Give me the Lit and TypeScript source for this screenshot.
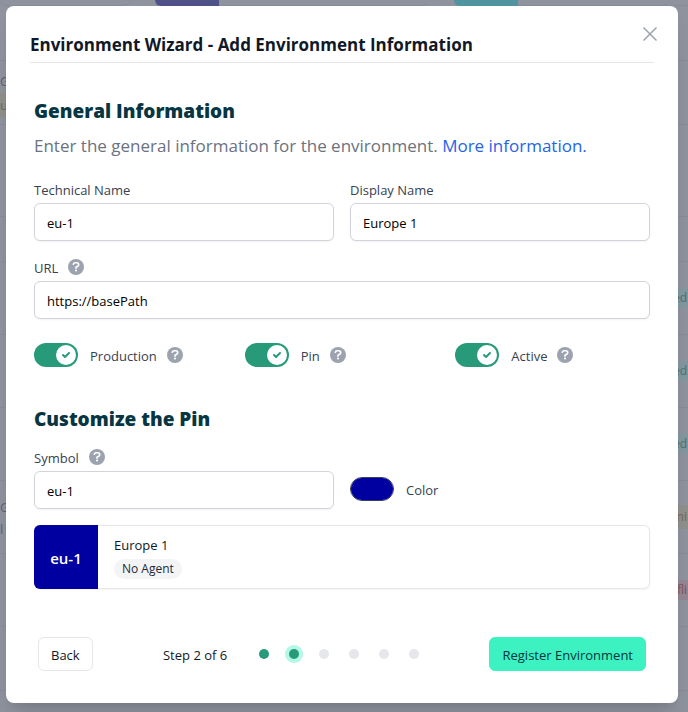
import { LitElement, html, css, nothing } from "lit";
import { customElement, property, state } from "lit/decorators.js";
import { classMap } from "lit/directives/class-map.js";

const fieldStyles = css`
  * {
    box-sizing: border-box;
  }
  .label-row {
    display: flex;
    align-items: center;
    gap: 10px;
    height: 20px;
    margin-bottom: 4px;
  }
  .label {
    padding-top: 2px;
    font-size: 13px;
    line-height: 20px;
    color: #374151;
  }
`;

@customElement("help-icon")
export class HelpIcon extends LitElement {
  static styles = css`
    :host {
      display: block;
      width: 16px;
      height: 16px;
      flex: none;
    }
    .icon {
      display: block;
    }
  `;

  render() {
    return html`<svg class="icon" width="16" height="16" viewBox="0 0 512 512" aria-hidden="true">
      <circle cx="256" cy="256" r="256" fill="#9ca3af" />
      <path
        d="M170 166c8-28 30-46 60-46h50c36 0 62 26 62 60 0 24-12 42-32 54l-54 32v30"
        fill="none"
        stroke="#fff"
        stroke-width="52"
        stroke-linecap="round"
        stroke-linejoin="round"
      />
      <circle cx="256" cy="368" r="34" fill="#fff" />
    </svg>`;
  }
}

@customElement("text-field")
export class TextField extends LitElement {
  @property() label = "";
  @property() value = "";
  @property({ type: Boolean }) help = false;

  static styles = [
    fieldStyles,
    css`
      :host {
        display: block;
        min-width: 0;
      }
      .input {
        display: block;
        width: 100%;
        height: 38px;
        padding: 2px 12px 0;
        border: 1px solid #d1d5db;
        border-radius: 6px;
        background: #fff;
        box-shadow: 0 1px 2px rgba(0, 0, 0, 0.05);
        font-family: inherit;
        font-size: 13px;
        line-height: 20px;
        color: #000;
      }
    `,
  ];

  render() {
    return html`
      <div class="label-row">
        <label class="label" for="field">${this.label}</label>
        ${this.help ? html`<help-icon></help-icon>` : nothing}
      </div>
      <input class="input" id="field" type="text" .value=${this.value} />
    `;
  }
}

@customElement("toggle-field")
export class ToggleField extends LitElement {
  @property() label = "";
  @property({ type: Boolean }) checked = false;

  static styles = [
    fieldStyles,
    css`
      :host {
        display: flex;
        align-items: center;
        height: 24px;
        gap: 10px;
      }
      .toggle {
        display: flex;
        align-items: center;
        gap: 12px;
      }
      .switch {
        display: grid;
        width: 44px;
        height: 24px;
        border-radius: 12px;
        background: #e5e7eb;
        padding: 2px;
      }
      .on {
        background: #279a7a;
      }
      .box,
      .knob {
        grid-area: 1 / 1;
      }
      .box {
        margin: 0;
        width: 40px;
        height: 20px;
        opacity: 0;
      }
      .knob {
        display: grid;
        place-items: center;
        width: 20px;
        height: 20px;
        border-radius: 50%;
        background: #fff;
        pointer-events: none;
      }
      .on .knob {
        justify-self: end;
      }
    `,
  ];

  render() {
    return html`
      <label class="toggle">
        <span class=${classMap({ switch: true, on: this.checked })}>
          <input
            class="box"
            type="checkbox"
            .checked=${this.checked}
            @change=${(e: Event) => (this.checked = (e.target as HTMLInputElement).checked)}
          />
          <span class="knob">
            ${this.checked
              ? html`<svg width="12" height="12" viewBox="0 0 12 12" fill="#279a7a" aria-hidden="true">
                  <path
                    d="M3.707 5.293a1 1 0 00-1.414 1.414l1.414-1.414zM5 8l-.707.707a1 1 0 001.414 0L5 8zm4.707-3.293a1 1 0 00-1.414-1.414l1.414 1.414zm-7.414 2l2 2 1.414-1.414-2-2-1.414 1.414zm3.414 2l4-4-1.414-1.414-4 4 1.414 1.414z"
                  />
                </svg>`
              : nothing}
          </span>
        </span>
        <span class="label">${this.label}</span>
      </label>
      <help-icon></help-icon>
    `;
  }
}

interface BackdropRow {
  size: string;
  left?: string[];
  leftTone?: string;
  right?: string;
  rightTone?: string;
}

const rows: BackdropRow[] = [
  { size: "h55" },
  { size: "h64", left: ["G", "u"], leftTone: "amber" },
  { size: "h92" },
  { size: "h45" },
  { size: "h73", right: "ed", rightTone: "teal" },
  { size: "h73", right: "ed", rightTone: "teal" },
  { size: "h73", right: "ed", rightTone: "teal" },
  { size: "h73", left: ["G", "l"], right: "ni", rightTone: "amber" },
  { size: "h73", right: "fli", rightTone: "rose" },
  { size: "h64" },
];

@customElement("dimmed-page")
export class DimmedPage extends LitElement {
  static styles = css`
    * {
      box-sizing: border-box;
    }
    :host {
      display: block;
      background: #8f939e;
      color: #5f636e;
      font-size: 13px;
      line-height: 20px;
    }
    .tiles {
      display: flex;
      height: 6px;
      gap: 25px;
    }
    .tile {
      display: flex;
      flex: none;
      width: 274px;
      border-bottom: 1px solid #888c98;
      border-radius: 0 0 6px 6px;
    }
    .first {
      width: 130px;
    }
    .block {
      width: 64px;
      height: 6px;
      border-radius: 0 0 0 6px;
    }
    .violet {
      background: #4f5289;
    }
    .cyan {
      background: #4f949f;
    }
    .row {
      display: flex;
      justify-content: space-between;
      align-items: center;
      border-bottom: 1px solid #888c98;
    }
    .h45 {
      height: 45px;
    }
    .h55 {
      height: 55px;
    }
    .h64 {
      height: 64px;
    }
    .h73 {
      height: 73px;
    }
    .h92 {
      height: 92px;
    }
    .left {
      display: flex;
      flex-direction: column;
      gap: 2px;
      width: 12px;
      padding-top: 2px;
    }
    .right {
      width: 18px;
      padding-right: 1px;
      font-size: 12px;
      font-weight: 500;
      text-align: right;
      white-space: nowrap;
    }
    .amber {
      background: #8f8f8c;
      color: #75685a;
      padding-top: 2px;
      padding-bottom: 2px;
    }
    .teal {
      background: #82979f;
      color: #4b716f;
    }
    .rose {
      background: #938794;
      color: #80525f;
    }
  `;

  render() {
    return html`
      <div class="tiles">
        <div class="tile first"></div>
        <div class="tile"><div class="block violet"></div></div>
        <div class="tile"><div class="block cyan"></div></div>
      </div>
      ${rows.map(
        (row) => html`<div class="row ${row.size}">
          <div class="left">
            ${(row.left ?? []).map(
              (text, i) => html`<span class=${i === 1 ? row.leftTone ?? "" : ""}>${text}</span>`
            )}
          </div>
          <div class="right ${row.rightTone ?? ""}">${row.right ?? nothing}</div>
        </div>`
      )}
    `;
  }
}

@customElement("app-root")
export class AppRoot extends LitElement {
  @state() private step = 2;
  @state() private color = "#0000a0";

  static styles = [
    fieldStyles,
    css`
      :host {
        display: block;
        position: relative;
        min-height: 100vh;
        overflow: hidden;
        padding: 6px 10px 9px 6px;
        background: #8f939e;
        font-family: "Open Sans", "Noto Sans", sans-serif;
      }
      .page {
        position: absolute;
        inset: 0;
      }
      .dialog {
        position: relative;
        padding: 24px 24px 32px;
        border-radius: 8px;
        background: #fff;
        box-shadow:
          0 20px 25px -5px rgba(0, 0, 0, 0.1),
          0 8px 10px -6px rgba(0, 0, 0, 0.1);
      }
      .close {
        position: absolute;
        top: 18px;
        right: 18px;
        width: 20px;
        height: 20px;
        padding: 0;
        border: 0;
        background: none;
        display: grid;
        place-items: center;
      }
      .title {
        margin: 0;
        height: 33px;
        border-bottom: 1px solid #e5e7eb;
        font-size: 17px;
        font-weight: 700;
        line-height: 30px;
        color: #111827;
      }
      .body {
        padding: 34px 4px 0;
      }
      .heading {
        margin: 0;
        font-size: 19px;
        font-weight: 800;
        line-height: 28px;
        color: #073642;
      }
      .intro {
        margin: 7px 0 19px;
        font-size: 17px;
        line-height: 28px;
        color: #6b7280;
      }
      .link {
        color: #2563eb;
        text-decoration: none;
      }
      .pair {
        display: grid;
        grid-template-columns: 1fr 1fr;
        gap: 16px;
        margin-bottom: 16px;
      }
      .toggles {
        display: grid;
        grid-template-columns: repeat(3, 1fr);
        gap: 16px;
        margin: 24px 0 38px;
      }
      .pin-heading {
        margin-bottom: 14px;
      }
      .color-row {
        display: flex;
        align-items: center;
        align-self: end;
        gap: 12px;
        height: 24px;
        margin-bottom: 8px;
      }
      .swatch {
        appearance: none;
        width: 44px;
        height: 24px;
        padding: 0;
        border: 1px solid #374151;
        border-radius: 12px;
        background: none;
        overflow: hidden;
      }
      .swatch::-webkit-color-swatch-wrapper {
        padding: 0;
      }
      .swatch::-webkit-color-swatch {
        border: 0;
      }
      .preview {
        display: flex;
        height: 64px;
        border: 1px solid #e5e7eb;
        border-left: 0;
        border-radius: 6px;
        box-shadow: 0 1px 2px rgba(0, 0, 0, 0.05);
      }
      .pin {
        display: grid;
        place-items: center;
        width: 64px;
        margin: -1px 0;
        padding-top: 2px;
        border-radius: 6px 0 0 6px;
        font-size: 15px;
        font-weight: 600;
        color: #fff;
      }
      .details {
        display: flex;
        flex-direction: column;
        align-items: flex-start;
        gap: 4px;
        padding: 9px 16px;
      }
      .name {
        font-size: 13px;
        line-height: 20px;
        color: #111827;
      }
      .badge {
        height: 20px;
        padding: 0 8px;
        border-radius: 10px;
        background: #f3f4f6;
        font-size: 12px;
        font-weight: 500;
        line-height: 20px;
        color: #1f2937;
      }
      .footer {
        display: flex;
        align-items: center;
        justify-content: space-between;
        padding: 48px 8px 0;
      }
      .button {
        height: 34px;
        padding: 2px 12px 0;
        border: 1px solid #e5e7eb;
        border-radius: 6px;
        background: #fff;
        font-family: inherit;
        font-size: 13px;
        line-height: 20px;
        color: #111827;
      }
      .primary {
        border-color: #3cf2c0;
        background: #3cf2c0;
        color: #073642;
      }
      .progress {
        display: flex;
        align-items: center;
        gap: 32px;
        font-size: 13px;
        line-height: 20px;
        color: #111827;
      }
      .step {
        padding-top: 2px;
      }
      .dots {
        display: flex;
        gap: 20px;
        margin: 0;
        padding: 0;
        list-style: none;
      }
      .dot {
        width: 10px;
        height: 10px;
        border-radius: 50%;
        background: #e5e7eb;
      }
      .done {
        background: #279a7a;
      }
      .current {
        box-shadow: 0 0 0 4px #b1f9e4;
      }
    `,
  ];

  render() {
    return html`
      <dimmed-page class="page" aria-hidden="true"></dimmed-page>
      <section class="dialog" role="dialog" aria-labelledby="title">
        <button class="close" type="button" aria-label="Close">
          <svg width="16" height="16" viewBox="0 0 16 16" aria-hidden="true">
            <path d="M1.5 1.5 14.5 14.5M14.5 1.5 1.5 14.5" stroke="#9ca3af" stroke-width="1.5" fill="none" />
          </svg>
        </button>
        <h2 class="title" id="title">Environment Wizard - Add Environment Information</h2>

        <div class="body">
          <h3 class="heading">General Information</h3>
          <p class="intro">
            Enter the general information for the environment.
            <a class="link" href="#more">More information.</a>
          </p>
          <div class="pair">
            <text-field label="Technical Name" value="eu-1"></text-field>
            <text-field label="Display Name" value="Europe 1"></text-field>
          </div>
          <text-field label="URL" value="https://basePath" help></text-field>
          <div class="toggles">
            <toggle-field label="Production" checked></toggle-field>
            <toggle-field label="Pin" checked></toggle-field>
            <toggle-field label="Active" checked></toggle-field>
          </div>

          <h3 class="heading pin-heading">Customize the Pin</h3>
          <div class="pair">
            <text-field label="Symbol" value="eu-1" help></text-field>
            <div class="color-row">
              <input
                class="swatch"
                id="color"
                type="color"
                .value=${this.color}
                @input=${(e: Event) => (this.color = (e.target as HTMLInputElement).value)}
              />
              <label class="label" for="color">Color</label>
            </div>
          </div>
          <div class="preview">
            <div class="pin" style="background:${this.color}">eu-1</div>
            <div class="details">
              <span class="name">Europe 1</span>
              <span class="badge">No Agent</span>
            </div>
          </div>
        </div>

        <div class="footer">
          <button class="button" type="button">Back</button>
          <div class="progress">
            <span class="step">Step ${this.step} of 6</span>
            <ol class="dots">
              ${[1, 2, 3, 4, 5, 6].map(
                (n) => html`<li
                  class=${classMap({ dot: true, done: n <= this.step, current: n === this.step })}
                ></li>`
              )}
            </ol>
          </div>
          <button class="button primary" type="button">Register Environment</button>
        </div>
      </section>
    `;
  }
}
